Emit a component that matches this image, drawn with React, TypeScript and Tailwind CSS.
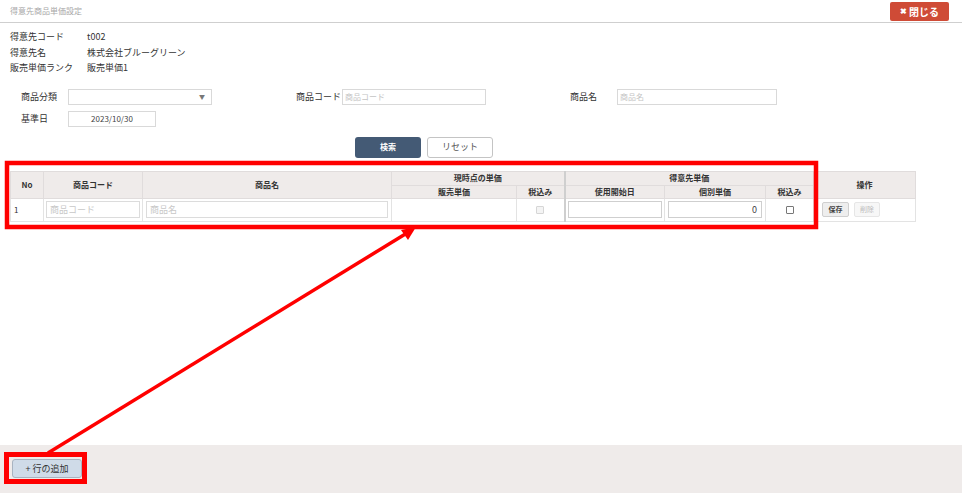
import React from "react";

const F = "font-['Noto_Sans_CJK_JP','Noto_Sans',sans-serif]";

function Info({ label, value }: { label: string; value: string }) {
  return (
    <div className="flex h-[15.5px] items-center text-[9px] text-[#333]">
      <span className="w-[77px]">{label}</span>
      <span>{value}</span>
    </div>
  );
}

function Box({ className = "", children }: { className?: string; children?: React.ReactNode }) {
  return (
    <div className={`h-[16px] border border-[#d9d9d9] bg-white flex items-center text-[8px] ${className}`}>{children}</div>
  );
}

const th = "border border-[#e0dcdc] bg-[#efebea] text-[8px] font-bold text-[#333] text-center";
const td = "border border-[#e3e3e3] text-[8px] text-[#333] px-[2px]";

export default function App() {
  return (
    <div className={`relative w-[962px] h-[493px] flex flex-col bg-white overflow-hidden ${F}`}>
      {/* Header */}
      <div className="h-[23px] shrink-0 border-b border-[#cfcfcf] flex items-center justify-between pl-[10px] pr-[13px]">
        <span className="text-[8px] text-[#a8a8a8]">得意先商品単価設定</span>
        <button className="h-[19px] w-[59px] bg-[#cf4b36] rounded-[2px] text-white text-[10px] font-bold flex items-center justify-center gap-[2px]">
          <span className="text-[8px]">✖</span>閉じる
        </button>
      </div>

      <div className="flex-1">
        {/* Info */}
        <div className="pl-[10px] pt-[6px]">
          <Info label="得意先コード" value="t002" />
          <Info label="得意先名" value="株式会社ブルーグリーン" />
          <Info label="販売単価ランク" value="販売単価1" />
        </div>

        {/* Search form */}
        <div className="mt-[13px] pl-[21px] flex flex-col gap-[6px]">
          <div className="flex items-center text-[9px] text-[#333]">
            <span className="w-[47px]">商品分類</span>
            <Box className="w-[144px] justify-end pr-[6px]">
              <span className="text-[6px] text-[#777]">▼</span>
            </Box>
            <span className="ml-[84px] w-[46px]">商品コード</span>
            <Box className="w-[144px] pl-[2px] text-[#c4c4c4]">商品コード</Box>
            <span className="ml-[84px] w-[47px]">商品名</span>
            <Box className="w-[160px] pl-[2px] text-[#c4c4c4]">商品名</Box>
          </div>
          <div className="flex items-center text-[9px] text-[#333]">
            <span className="w-[47px]">基準日</span>
            <Box className="w-[88px] justify-center text-[#444]">2023/10/30</Box>
          </div>
        </div>

        {/* Buttons */}
        <div className="mt-[10px] ml-[355px] flex gap-[6px]">
          <button className="w-[66px] h-[21px] bg-[#445a75] rounded-[3px] text-white text-[8px] font-bold">検索</button>
          <button className="w-[66px] h-[21px] bg-white border border-[#c4c4c4] rounded-[3px] text-[#555] text-[9px]">リセット</button>
        </div>

        {/* Table */}
        <div className="mt-[13px] ml-[10px]">
          <table className="border-collapse w-[905px] table-fixed">
            <colgroup>
              <col className="w-[33px]" />
              <col className="w-[99px]" />
              <col className="w-[249px]" />
              <col className="w-[125px]" />
              <col className="w-[48px]" />
              <col className="w-[100px]" />
              <col className="w-[101px]" />
              <col className="w-[48px]" />
              <col className="w-[102px]" />
            </colgroup>
            <thead>
              <tr className="h-[14px]">
                <th rowSpan={2} className={th}>No</th>
                <th rowSpan={2} className={th}>商品コード</th>
                <th rowSpan={2} className={th}>商品名</th>
                <th colSpan={2} className={th}>現時点の単価</th>
                <th colSpan={3} className={`${th} border-l-2 border-l-[#cfcfcf]`}>得意先単価</th>
                <th rowSpan={2} className={th}>操作</th>
              </tr>
              <tr className="h-[13px]">
                <th className={th}>販売単価</th>
                <th className={th}>税込み</th>
                <th className={`${th} border-l-2 border-l-[#cfcfcf]`}>使用開始日</th>
                <th className={th}>個別単価</th>
                <th className={th}>税込み</th>
              </tr>
            </thead>
            <tbody>
              <tr className="h-[23px]">
                <td className={`${td} pl-[3px]`}>1</td>
                <td className={td}>
                  <div className="h-[17px] border border-[#dcdcdc] flex items-center pl-[3px] text-[9px] text-[#c8c8c8]">商品コード</div>
                </td>
                <td className={`${td} px-[3px]`}>
                  <div className="h-[17px] border border-[#dcdcdc] flex items-center pl-[3px] text-[9px] text-[#c8c8c8]">商品名</div>
                </td>
                <td className={td}></td>
                <td className={td}>
                  <div className="mx-auto w-[8px] h-[8px] border border-[#d6d6d6] bg-[#f4f4f4] rounded-[1px]" />
                </td>
                <td className={`${td} border-l-2 border-l-[#cfcfcf]`}>
                  <div className="h-[17px] border border-[#cfcfcf]" />
                </td>
                <td className={`${td} px-[3px]`}>
                  <div className="h-[17px] border border-[#cfcfcf] flex items-center justify-end pr-[4px] text-[9px] text-[#444]">0</div>
                </td>
                <td className={td}>
                  <div className="mx-auto w-[8px] h-[8px] border border-[#777] bg-white rounded-[1px]" />
                </td>
                <td className={`${td} pl-[8px]`}>
                  <div className="flex gap-[5px]">
                    <div className="w-[27px] h-[15px] bg-[#eeeeee] border border-[#cfcfcf] rounded-[2px] flex items-center justify-center text-[7px] font-bold text-[#444]">保存</div>
                    <div className="w-[26px] h-[15px] bg-[#f7f7f7] border border-[#e6e6e6] rounded-[2px] flex items-center justify-center text-[7px] text-[#bbb]">削除</div>
                  </div>
                </td>
              </tr>
            </tbody>
          </table>
        </div>
      </div>

      {/* Footer */}
      <div className="h-[48px] shrink-0 bg-[#efebea] pl-[12px] pt-[14px] flex items-start">
        <button className="w-[70px] h-[19px] bg-[#cfdbe8] border border-[#a8b3c0] rounded-[3px] text-[9px] text-[#333] flex items-center justify-center">+ 行の追加</button>
      </div>

      {/* Annotation overlay */}
      <svg className="absolute inset-0 pointer-events-none" width="962" height="493" viewBox="0 0 962 493">
        <rect x="7" y="163" width="809" height="64" fill="none" stroke="#ff0000" strokeWidth="4.5" />
        <rect x="6.5" y="454.5" width="78" height="27" fill="none" stroke="#ff0000" strokeWidth="5" />
        <line x1="48" y1="453" x2="407" y2="233" stroke="#ff0000" strokeWidth="3.5" />
        <polygon points="416,227 401,230 408,240" fill="#ff0000" />
      </svg>
    </div>
  );
}
